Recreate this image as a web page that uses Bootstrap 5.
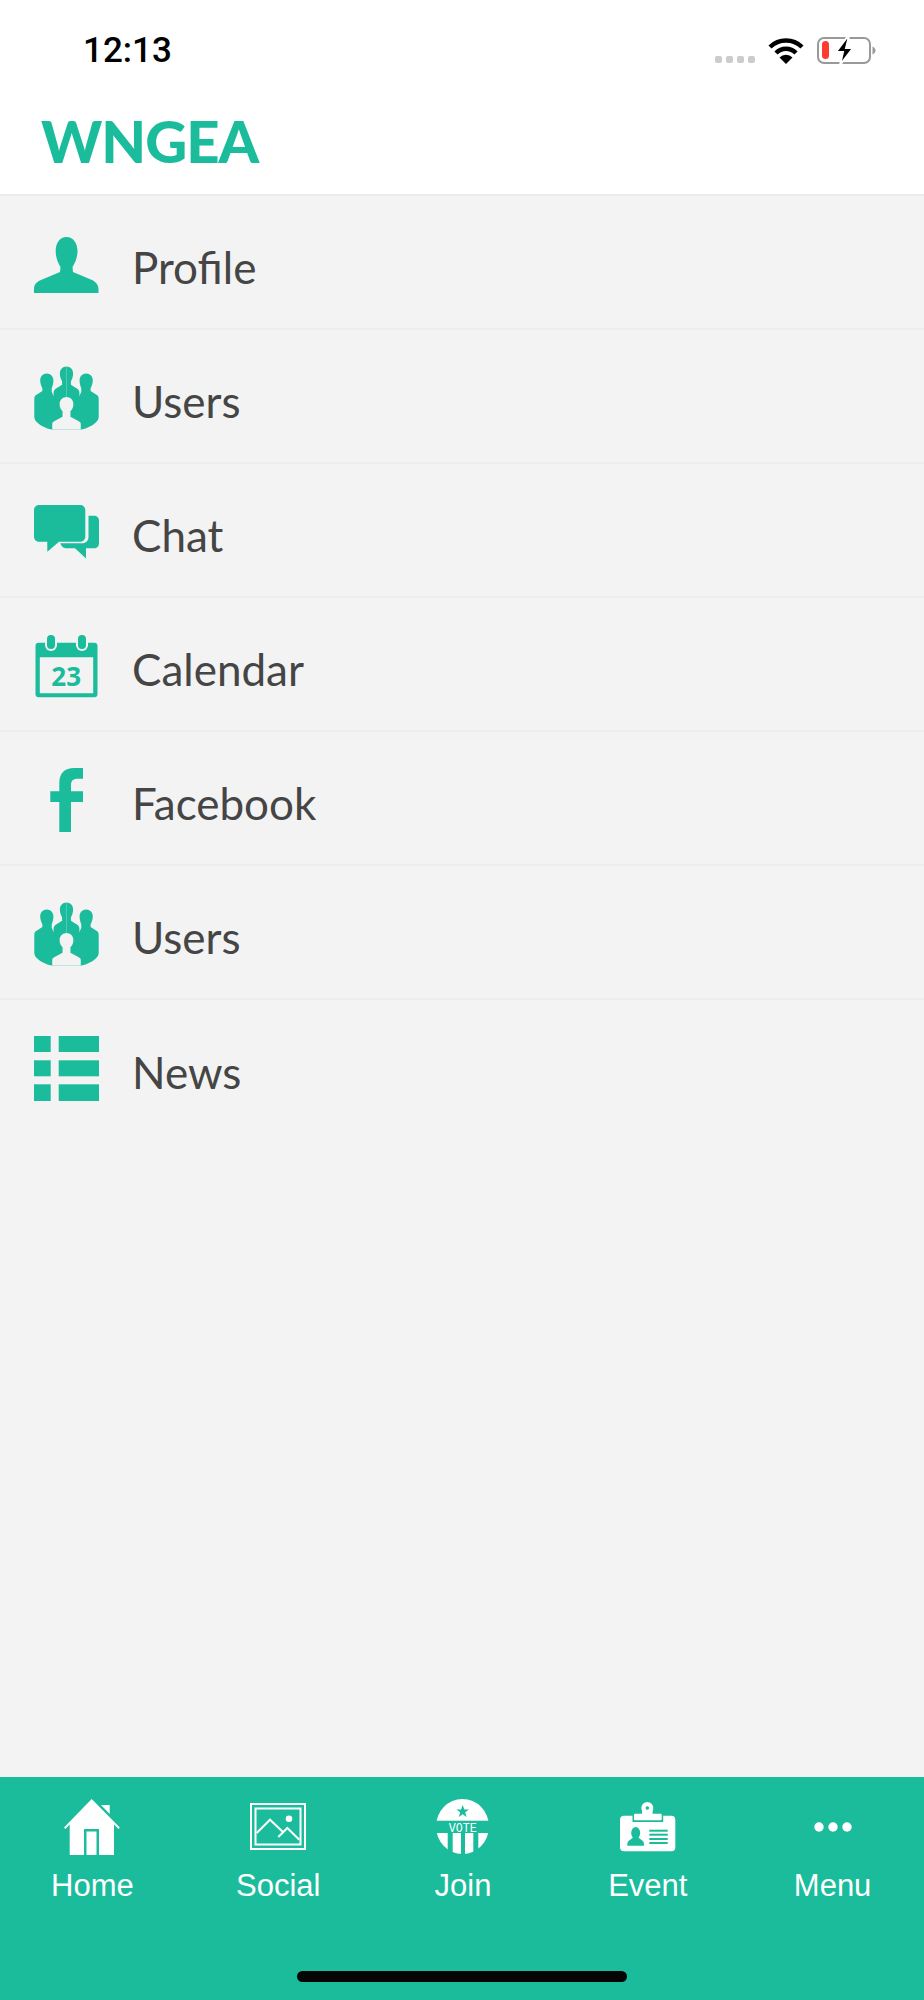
<!DOCTYPE html>
<html lang="en">

<head>
    <meta charset="UTF-8">
    <meta name="viewport" content="width=device-width, initial-scale=1.0">
    <title>WNGEA</title>
    <link href="https://cdn.jsdelivr.net/npm/bootstrap@5.3.0/dist/css/bootstrap.min.css" rel="stylesheet">
    <style>
        body {
            background-color: #f3f3f3;
        }

        .app-top {
            height: 196px;
            background-color: #fff;
            border-bottom: 2px solid #ebebeb;
        }

        .status-row {
            height: 76px;
            padding: 34px 48px 0 83px;
        }

        .status-time {
            margin-top: 1px;
            font: 500 35px/32px Roboto, "Liberation Sans", sans-serif;
            color: #000;
        }

        .signal-dot {
            width: 7px;
            height: 7px;
            margin-right: 4px;
            border-radius: 2px;
            background-color: #ccc;
        }

        .signal-dots {
            margin: 22px 9px 0 0;
        }

        .status-icon {
            margin-top: 3px;
        }

        .wifi-icon {
            margin-right: 9px;
        }

        .brand-name {
            padding: 35px 0 0 41px;
            font: 900 58px/60px Lato, "Liberation Sans", sans-serif;
            letter-spacing: -1px;
            color: #1abc9c;
        }

        .menu-rows {
            --bs-list-group-bg: #f3f3f3;
            --bs-list-group-border-color: #ededed;
            --bs-list-group-border-width: 2px;
            --bs-list-group-border-radius: 0;
        }

        .menu-row {
            height: 134px;
            padding: 0 0 0 34px;
            font: 400 44px/48px Lato, "Open Sans", sans-serif;
            color: #454545;
        }

        .menu-icon {
            width: 65px;
            margin: 4px 33px 0 0;
            flex-shrink: 0;
            fill: #1abc9c;
        }

        .menu-label {
            margin-top: 9px;
        }

        .tab-bar {
            height: 223px;
            background-color: #1abc9c;
        }

        .tab-item {
            width: 20%;
            padding-top: 20px;
            font: 400 31px/36px "Liberation Sans", Arial, sans-serif;
            color: #fff;
        }

        .tab-item + .tab-item {
            padding-left: 2px;
        }

        .tab-icon {
            height: 59px;
            margin-bottom: 12px;
        }

        .home-line {
            width: 330px;
            height: 11px;
            margin-bottom: 18px;
            border-radius: 6px;
            background-color: #050505;
        }
    </style>
</head>

<body>
    <div class="d-flex flex-column vh-100">
        <header class="app-top">
            <div class="status-row d-flex">
                <div class="status-time me-auto">12:13</div>
                <div class="signal-dots d-flex">
                    <span class="signal-dot"></span><span class="signal-dot"></span><span class="signal-dot"></span><span class="signal-dot"></span>
                </div>
                <svg class="status-icon wifi-icon" width="36" height="27" viewBox="0 0 36 27">
                    <path d="M2 10A23 23 0 0 1 34 10M8 16A14 14 0 0 1 28 16" fill="none" stroke="#000" stroke-width="4.5"/>
                    <path d="M18 27 11.5 20.5A9 9 0 0 1 24.5 20.5Z"/>
                </svg>
                <svg class="status-icon ms-1" width="59" height="27" viewBox="0 0 59 27">
                    <rect x="1" y="1" width="52" height="25" rx="6" fill="none" stroke="#999" stroke-width="2"/>
                    <rect x="5" y="4" width="7" height="18" rx="3.5" fill="#ff3b30"/>
                    <path d="M55.5 9.5c2 1 3 2.500 3 4s-1 3-3 4Z" fill="#999"/>
                    <path d="M31 -1 19 15h7l-3 13 13-17h-7l3-12Z" fill="#000" stroke="#fff" stroke-width="2"/>
                </svg>
            </div>
            <div class="brand-name">WNGEA</div>
        </header>

        <main class="flex-grow-1">
            <div class="list-group list-group-flush menu-rows">
                <div class="list-group-item menu-row d-flex align-items-center">
                    <svg class="menu-icon" width="65" height="58" viewBox="0 -2 65 58">
                        <path d="M32.500 0C26 0 21.700 6 21.700 14 21.700 21 24 26 26.500 30L26 35 7 43C2 45 0 48 0 52V56H64.500V52C64.500 48 62 45 58 43L39 35 38.500 30C41 26 43.500 21 43.500 14 43.500 6 39 0 32.500 0Z"/>
                    </svg>
                    <span class="menu-label">Profile</span>
                </div>
                <div class="list-group-item menu-row d-flex align-items-center">
                    <svg class="menu-icon" width="65" height="64" viewBox="0 0 66 64">
                        <g id="usersIcon">
                            <path d="M13 7C9 7 6.300 10 6.300 14 6.300 17 7.300 20 8.500 22V25L3 28.500C1 29.500.300 31 .300 33V51C.300 53 1.300 55 3.300 57 6.800 60.500 12.300 63 17.700 64H33V30H20L18 26V22C19 20 19.700 17 19.700 14 19.700 10 17 7 13 7Z"/>
                            <path d="M33 0C29 0 26.300 3 26.300 7 26.300 10 27.300 13 28.500 15V18.500L22 22.500C20 24 19.500 26 20 30H33Z"/>
                        </g>
                        <use href="#usersIcon" transform="matrix(-1 0 0 1 66 0)"/>
                        <path fill="#f3f3f3" d="M33 31C29 31 26 34 26 38 26 41 27 43.500 29 45.500V51L20.500 55.500C19 56.500 18.500 57 18.500 58.500V64H47.500V58.500C47.500 57 47 56.500 45.500 55.500L37 51V45.500C39 43.500 40 41 40 38 40 34 37 31 33 31Z"/>
                    </svg>
                    <span class="menu-label">Users</span>
                </div>
                <div class="list-group-item menu-row d-flex align-items-center">
                    <svg class="menu-icon" width="65" height="54" viewBox="0 0 65 54">
                        <path d="M5 0H46.300C49 0 51.300 2.300 51.300 5V31.700C51.300 34.400 49 36.700 46.300 36.700H25L13.300 46.700V36.700H5C2.300 36.700 0 34.400 0 31.700V5C0 2.300 2.300 0 5 0Z"/>
                        <path d="M54.500 10.700H60C63 10.700 65 12.700 65 15.700V38.300C65 41.300 63 43.300 60 43.300H52V53.500L41 43.300H33C30 43.300 27.500 42 26.300 38.300H48C52 38.300 54.500 35.500 54.500 32Z"/>
                    </svg>
                    <span class="menu-label">Chat</span>
                </div>
                <div class="list-group-item menu-row d-flex align-items-center">
                    <svg class="menu-icon" width="62" height="63" viewBox="0 0 62 63">
                        <path fill-rule="evenodd" d="M3 7.700H59C60.700 7.700 62 9 62 10.700V59.300C62 61 60.700 62.300 59 62.300H3C1.300 62.300 0 61 0 59.300V10.700C0 9 1.300 7.700 3 7.700ZM4.300 22.300V58.300H57.700V22.300Z"/>
                        <rect x="9.500" y="-1" width="12" height="17" rx="6" fill="#f3f3f3"/>
                        <rect x="40.500" y="-1" width="12" height="17" rx="6" fill="#f3f3f3"/>
                        <rect x="11.500" y="0" width="8" height="14" rx="4"/>
                        <rect x="42.500" y="0" width="8" height="14" rx="4"/>
                        <text x="30.700" y="51" text-anchor="middle" font-family="Open Sans" font-weight="700" font-size="26">23</text>
                    </svg>
                    <span class="menu-label">Calendar</span>
                </div>
                <div class="list-group-item menu-row d-flex align-items-center">
                    <svg class="menu-icon" width="33" height="64" viewBox="0 0 33 64">
                        <path d="M33 0V10.700H28C24 10.700 21 12.200 21 16.700V23.300H33V34H21V64H9.300V34H.300V23.300H9.300V15C9.300 5 15 0 24 0Z"/>
                    </svg>
                    <span class="menu-label">Facebook</span>
                </div>
                <div class="list-group-item menu-row d-flex align-items-center">
                    <svg class="menu-icon" width="65" height="64" viewBox="0 0 66 64">
                        <use href="#usersIcon"/>
                        <use href="#usersIcon" transform="matrix(-1 0 0 1 66 0)"/>
                        <path fill="#f3f3f3" d="M33 31C29 31 26 34 26 38 26 41 27 43.500 29 45.500V51L20.500 55.500C19 56.500 18.500 57 18.500 58.500V64H47.500V58.500C47.500 57 47 56.500 45.500 55.500L37 51V45.500C39 43.500 40 41 40 38 40 34 37 31 33 31Z"/>
                    </svg>
                    <span class="menu-label">Users</span>
                </div>
                <div class="list-group-item menu-row d-flex align-items-center">
                    <svg class="menu-icon" width="65" height="66" viewBox="0 0 65 66">
                        <rect width="16.700" height="16"/><rect x="24.700" width="40.300" height="16"/>
                        <rect y="24.300" width="16.700" height="16"/><rect x="24.700" y="24.300" width="40.300" height="16"/>
                        <rect y="48.300" width="16.700" height="16.700"/><rect x="24.700" y="48.300" width="40.300" height="16.700"/>
                    </svg>
                    <span class="menu-label">News</span>
                </div>
            </div>
        </main>

        <nav class="tab-bar d-flex flex-column">
            <div class="d-flex text-center flex-grow-1">
                <div class="tab-item">
                    <div class="tab-icon d-flex align-items-center justify-content-center">
                        <svg width="56" height="56" viewBox="0 0 56 56" fill="#fff">
                            <path d="M27.700 0 55.800 28.500 54.500 30 50 25.500V56H5.700V25.500L1.300 30 0 28.500Z"/>
                            <path d="M37 6H45.700V15Z"/>
                            <rect x="20" y="30" width="15" height="26" fill="#1abc9c"/>
                            <rect x="22.500" y="32.500" width="10" height="23.500"/>
                        </svg>
                    </div>
                    <div>Home</div>
                </div>
                <div class="tab-item">
                    <div class="tab-icon d-flex align-items-center justify-content-center">
                        <svg width="56" height="47" viewBox="0 0 56 47" fill="none" stroke="#fff" stroke-width="2">
                            <rect x="1" y="1" width="54" height="45"/>
                            <rect x="5.500" y="5.500" width="45" height="36"/>
                            <path d="M6.700 30 20 16.700 33.500 29.500M28.300 34 37.300 25 49.300 36.700"/>
                            <circle cx="39" cy="15.700" r="3.300" fill="#fff" stroke="none"/>
                        </svg>
                    </div>
                    <div>Social</div>
                </div>
                <div class="tab-item">
                    <div class="tab-icon d-flex align-items-center justify-content-center">
                        <svg width="53" height="55" viewBox="0 0 53 55" fill="#fff">
                            <clipPath id="voteClip"><ellipse cx="26.500" cy="27.500" rx="26.500" ry="27.500"/></clipPath>
                            <g clip-path="url(#voteClip)">
                                <rect width="53" height="21.700"/>
                                <rect y="34" width="11.700" height="21"/>
                                <rect x="16.700" y="34" width="8.300" height="21"/>
                                <rect x="29" y="34" width="8.300" height="21"/>
                                <rect x="42.300" y="34" width="11" height="21"/>
                            </g>
                            <path fill="#1abc9c" d="M26.700 6 28.300 10.500H33L29.200 13.300 30.600 18 26.700 15.200 22.800 18 24.200 13.300 20.400 10.500H25.100Z"/>
                            <text x="12.700" y="32.500" font-family="Liberation Mono" font-size="13" textLength="28" lengthAdjust="spacingAndGlyphs">VOTE</text>
                        </svg>
                    </div>
                    <div>Join</div>
                </div>
                <div class="tab-item">
                    <div class="tab-icon d-flex align-items-center justify-content-center">
                        <svg width="56" height="50" viewBox="0 0 56 50" fill="#fff">
                            <rect y="13.700" width="55.300" height="35.600" rx="4"/>
                            <rect x="12.500" y="10" width="30.700" height="10" fill="#1abc9c"/>
                            <rect x="14" y="11.700" width="27.700" height="6.600" rx="1"/>
                            <circle cx="27.300" cy="6" r="6"/>
                            <rect x="22" y="7" width="10.600" height="6"/>
                            <circle cx="27.300" cy="6" r="1.800" fill="#1abc9c"/>
                            <g fill="#1abc9c">
                                <ellipse cx="15.700" cy="31" rx="4.500" ry="6"/>
                                <path d="M12.500 36 8.500 39C7.700 39.700 7.300 41 7.300 43.700H24C24 41 23.600 39.700 22.800 39L19 36Z"/>
                                <rect x="29.300" y="27.700" width="18.400" height="2"/>
                                <rect x="29.300" y="31.700" width="18.400" height="2"/>
                                <rect x="29.300" y="36" width="18.400" height="2"/>
                                <rect x="29.300" y="40" width="18.400" height="2"/>
                            </g>
                        </svg>
                    </div>
                    <div>Event</div>
                </div>
                <div class="tab-item">
                    <div class="tab-icon d-flex align-items-center justify-content-center">
                        <svg width="38" height="10" viewBox="0 0 38 10" fill="#fff">
                            <circle cx="5" cy="5" r="4.700"/><circle cx="19" cy="5" r="4.700"/><circle cx="33" cy="5" r="4.700"/>
                        </svg>
                    </div>
                    <div>Menu</div>
                </div>
            </div>
            <div class="home-line mx-auto"></div>
        </nav>
    </div>

    <script src="https://cdn.jsdelivr.net/npm/bootstrap@5.3.0/dist/js/bootstrap.bundle.min.js"></script>
</body>

</html>
